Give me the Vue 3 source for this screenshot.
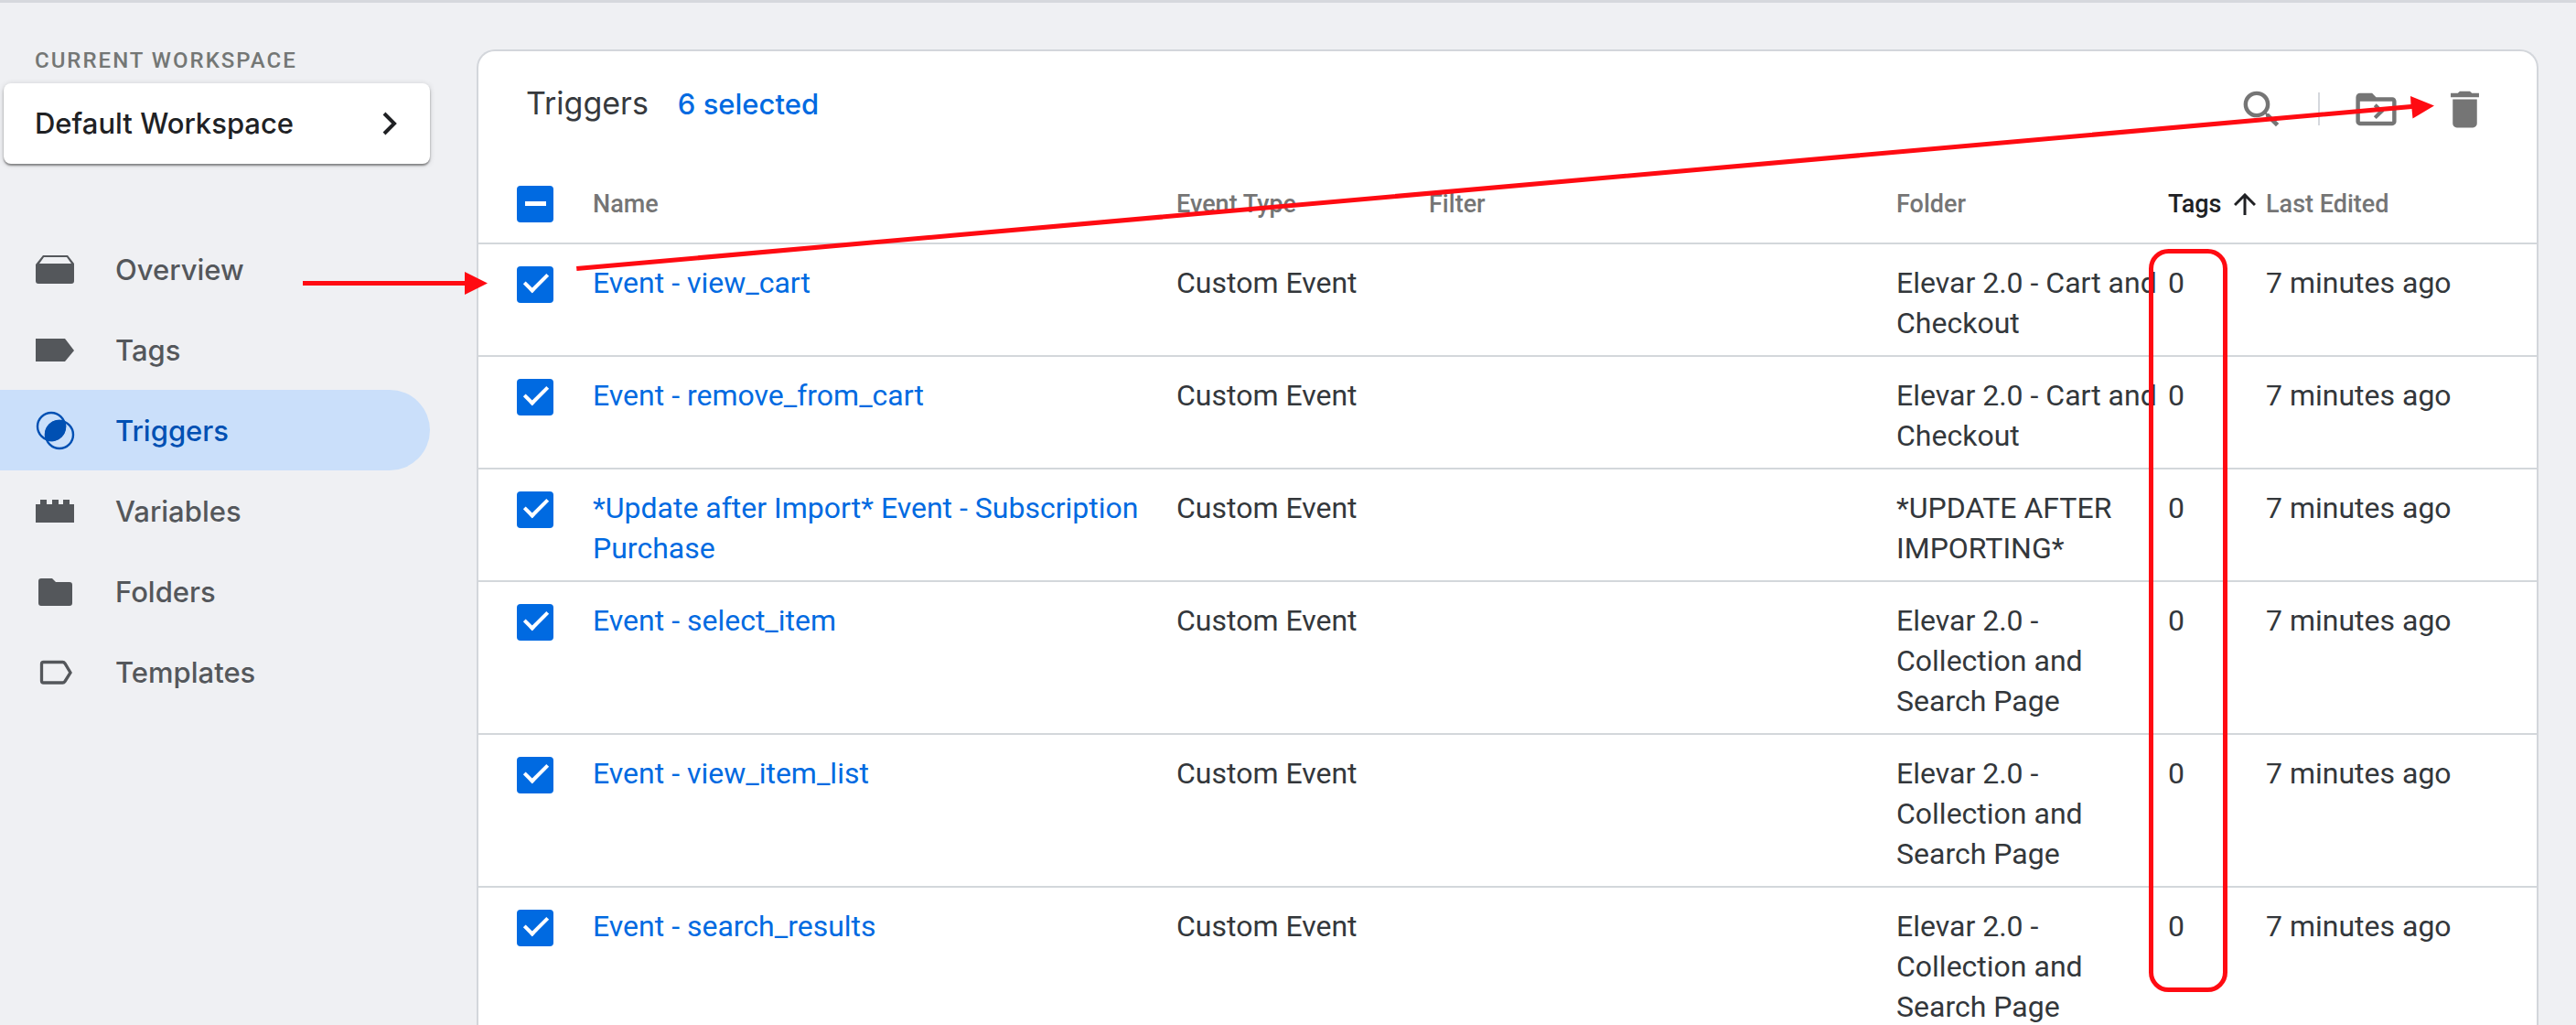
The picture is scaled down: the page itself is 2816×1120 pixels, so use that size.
<script setup>
import { ref } from 'vue'

const navItems = [
  { id: 'overview', label: 'Overview' },
  { id: 'tags', label: 'Tags' },
  { id: 'triggers', label: 'Triggers', active: true },
  { id: 'variables', label: 'Variables' },
  { id: 'folders', label: 'Folders' },
  { id: 'templates', label: 'Templates' },
]

const cart = 'Elevar 2.0 - Cart and Checkout'
const collection = 'Elevar 2.0 - Collection and Search Page'

const triggers = ref([
  { name: 'Event - view_cart', folder: cart },
  { name: 'Event - remove_from_cart', folder: cart },
  { name: '*Update after Import* Event - Subscription Purchase', folder: '*UPDATE AFTER IMPORTING*' },
  { name: 'Event - select_item', folder: collection },
  { name: 'Event - view_item_list', folder: collection },
  { name: 'Event - search_results', folder: collection },
].map((t) => ({ ...t, type: 'Custom Event', tags: 0, edited: '7 minutes ago', selected: true })))
</script>

<template>
  <div class="app">
    <aside class="sidebar">
      <div class="workspace-label" id="workspace-label">CURRENT WORKSPACE</div>
      <button class="workspace" type="button" aria-describedby="workspace-label">
        <span>Default Workspace</span>
        <svg width="20" height="28" viewBox="0 0 20 28" aria-hidden="true">
          <path d="M4 3L15 14L4 25" fill="none" stroke="currentColor" stroke-width="4" />
        </svg>
      </button>
      <nav class="nav">
        <a v-for="item in navItems" :key="item.id" href="#" class="nav-item" :class="{ active: item.active }">
          <svg class="nav-icon" viewBox="0 0 44 44" fill="currentColor" aria-hidden="true">
            <path v-if="item.id === 'overview'" d="M9 7h27l7 9v19q0 3-3 3H4q-3 0-3-3V17zM10 9L5 16h35L35 9z" fill-rule="evenodd" />
            <path v-else-if="item.id === 'tags'" d="M1 10h32l10 13-10 12H1z" />
            <template v-else-if="item.id === 'triggers'">
              <circle cx="18" cy="18" r="15" fill="none" stroke="currentColor" stroke-width="2.4" />
              <circle cx="27" cy="27" r="15" fill="none" stroke="currentColor" stroke-width="2.4" />
              <path d="M33 12A16 16 0 0 1 12 33A16 16 0 0 1 33 12z" />
            </template>
            <path v-else-if="item.id === 'variables'" d="M1 15h5v-5h7v5h6v-5h7v5h5v-5h7v5h5v20H1z" />
            <path v-else-if="item.id === 'folders'" d="M7 8h12l4 4h15q3 0 3 3v20q0 3-3 3H7q-3 0-3-3V11q0-3 3-3z" />
            <path v-else d="M9.500 11.500H30.500q1.500 0 2.500 1.500L39 23l-6 9.500q-1 1.500-2.500 1.500H9.500q-2 0-2-2V13.500q0-2 2-2z" fill="none" stroke="currentColor" stroke-width="3.300" />
          </svg>
          <span>{{ item.label }}</span>
        </a>
      </nav>
    </aside>

    <main class="panel">
      <header class="toolbar">
        <div class="heading">
          <h1>Triggers</h1>
          <span class="selected">6 selected</span>
        </div>
        <div class="actions">
          <button type="button" class="icon-button" aria-label="Search">
            <svg viewBox="0 0 24 24" aria-hidden="true">
              <path d="M15.500 14h-.79l-.28-.27A6.471 6.471 0 0 0 16 9.500 6.500 6.500 0 1 0 9.500 16c1.610 0 3.090-.59 4.230-1.570l.27.28v.79l5 4.990L20.490 19l-4.990-5zm-6 0C7.010 14 5 11.990 5 9.500S7.010 5 9.500 5 14 7.010 14 9.500 11.990 14 9.500 14z" />
            </svg>
          </button>
          <span class="divider"></span>
          <button type="button" class="icon-button" aria-label="Move to folder">
            <svg viewBox="0 0 24 24" aria-hidden="true">
              <path d="M20 6h-8l-2-2H4c-1.100 0-2 .9-2 2v12c0 1.100.9 2 2 2h16c1.100 0 2-.9 2-2V8c0-1.100-.9-2-2-2zm0 12H4V8h16z" />
              <path d="M12.100 9.200L16 13l-3.900 3.800-1.300-1.300L13.200 13l-2.400-2.500z" />
            </svg>
          </button>
          <button type="button" class="icon-button delete" aria-label="Delete">
            <svg viewBox="0 0 24 24" aria-hidden="true">
              <path d="M6 19c0 1.100.9 2 2 2h8c1.100 0 2-.9 2-2V7H6zM19 4h-3.500l-1-1h-5l-1 1H5v2h14z" />
            </svg>
          </button>
        </div>
      </header>

      <table>
        <colgroup>
          <col class="c-check" /><col class="c-name" /><col class="c-type" /><col />
          <col class="c-folder" /><col class="c-tags" /><col class="c-edited" />
        </colgroup>
        <thead>
          <tr>
            <th class="check"><input type="checkbox" class="box partial" :indeterminate="true" aria-label="Select all triggers" /></th>
            <th>Name</th>
            <th>Event Type</th>
            <th>Filter</th>
            <th>Folder</th>
            <th class="sorted" aria-sort="ascending">
              <span class="sort">Tags
                <svg width="24" height="24" viewBox="0 0 24 24" aria-hidden="true">
                  <path d="M12 24V2M1 13L12 2L23 13" fill="none" stroke="currentColor" stroke-width="3" />
                </svg>
              </span>
            </th>
            <th>Last Edited</th>
          </tr>
        </thead>
        <tbody>
          <tr v-for="t in triggers" :key="t.name">
            <td class="check"><input v-model="t.selected" type="checkbox" class="box" :aria-label="'Select ' + t.name" /></td>
            <td><a href="#">{{ t.name }}</a></td>
            <td>{{ t.type }}</td>
            <td></td>
            <td>{{ t.folder }}</td>
            <td>{{ t.tags }}</td>
            <td>{{ t.edited }}</td>
          </tr>
        </tbody>
      </table>
    </main>

    <svg class="markup" width="2816" height="1120" viewBox="0 0 2816 1120" aria-hidden="true">
      <g fill="#ff0b12">
        <path d="M331 307H508V297L533 309.500L508 322V312H331z" />
        <path d="M630 291L2635.500 114L2635 105L2661 115.500L2637.500 129.500L2636.500 119L630.500 296z" />
      </g>
      <rect x="2351.500" y="274.500" width="81" height="807" rx="19" fill="none" stroke="#ff0b12" stroke-width="5" />
    </svg>
  </div>
</template>

<style>
body {
  background: #eff0f3;
}
</style>

<style scoped>
.app {
  position: relative;
  box-sizing: border-box;
  display: flex;
  align-items: stretch;
  height: 100vh;
  overflow: hidden;
  padding-right: 41px;
  border-top: 3px solid #d6d8dd;
  background: #eff0f3;
  font-family: Roboto, "Liberation Sans", sans-serif;
  color: #33373b;
}

.sidebar {
  flex: none;
  width: 470px;
  margin-right: 51px;
  font-family: Inter, Roboto, sans-serif;
}

.workspace-label {
  margin: 47px 0 9px 38px;
  font-family: Roboto, sans-serif;
  font-size: 24px;
  font-weight: 500;
  line-height: 32px;
  letter-spacing: 2px;
  color: #747775;
}

.workspace {
  display: flex;
  align-items: center;
  justify-content: space-between;
  width: 466px;
  height: 88px;
  margin-left: 4px;
  padding: 0 34px;
  border: 0;
  border-radius: 8px;
  background: #fff;
  box-shadow: 0 2px 2px rgba(0, 0, 0, 0.4), 0 1px 6px rgba(0, 0, 0, 0.16);
  color: #202124;
  font: 500 31px/44px Inter, Roboto, sans-serif;
}

.nav {
  margin-top: 71px;
}

.nav-item {
  display: flex;
  align-items: center;
  gap: 44px;
  height: 88px;
  padding-left: 38px;
  border-radius: 0 44px 44px 0;
  color: #54575b;
  font-size: 31px;
  font-weight: 500;
  text-decoration: none;
}

.nav-item.active {
  background: #cadffa;
  color: #0050b3;
}

.nav-icon {
  width: 44px;
  height: 44px;
}

.panel {
  flex: 1;
  min-width: 0;
  margin-top: 51px;
  overflow: hidden;
  border: 2px solid #d3d6db;
  border-bottom: 0;
  border-radius: 20px 20px 0 0;
  background: #fff;
}

.toolbar {
  display: flex;
  align-items: center;
  justify-content: space-between;
  height: 124px;
  padding: 0 52px;
}

.heading {
  display: flex;
  align-items: baseline;
  gap: 32px;
  padding-bottom: 11px;
  font-family: Inter, Roboto, sans-serif;
}

h1 {
  margin: 0;
  font-size: 34px;
  font-weight: 400;
  line-height: 44px;
  color: #36393d;
}

.selected {
  font-size: 31px;
  font-weight: 500;
  color: #006ae1;
}

.actions {
  display: flex;
  align-items: center;
  padding-top: 2px;
}

.icon-button {
  width: 53px;
  height: 53px;
  padding: 0;
  border: 0;
  background: none;
  fill: #757575;
}

.icon-button svg {
  display: block;
}

.divider {
  width: 2px;
  height: 36px;
  margin: 0 35px;
  background: #d5d8dd;
}

.delete {
  margin-left: 44px;
}

table {
  width: 100%;
  table-layout: fixed;
  border-collapse: separate;
  border-spacing: 0;
}

.c-check { width: 125px; }
.c-name { width: 638px; }
.c-type { width: 276px; }
.c-folder { width: 297px; }
.c-tags { width: 107px; }
.c-edited { width: 296px; }

th,
td {
  border-bottom: 2px solid #d3d7db;
  text-align: left;
  vertical-align: top;
  line-height: 44px;
}

th {
  padding: 21px 0 20px;
  font-size: 27px;
  font-weight: 500;
  color: #757575;
  white-space: nowrap;
}

td {
  padding: 20px 10px 13px 0;
  font-size: 32px;
}

.sorted {
  color: #202124;
}

.sort {
  display: flex;
  align-items: center;
  gap: 14px;
}

.sort svg {
  flex: none;
}

.check {
  padding-left: 42px;
  line-height: 0;
}

td a {
  color: #006ae1;
  text-decoration: none;
}

.box {
  appearance: none;
  display: block;
  position: relative;
  width: 40px;
  height: 40px;
  margin: 4px 0 0;
  border-radius: 4px;
  background: #fff;
}

th .box {
  margin-top: 2px;
}

.box:checked,
.partial {
  background: #006ae1;
}

.box:checked::after {
  content: "";
  position: absolute;
  left: 14px;
  top: 2px;
  width: 10px;
  height: 22px;
  border: solid #fff;
  border-width: 0 4px 4px 0;
  transform: rotate(45deg);
}

.partial::after {
  content: "";
  position: absolute;
  left: 9px;
  top: 17px;
  width: 23px;
  height: 5px;
  background: #fff;
}

.markup {
  position: absolute;
  left: 0;
  top: -3px;
  pointer-events: none;
}
</style>
